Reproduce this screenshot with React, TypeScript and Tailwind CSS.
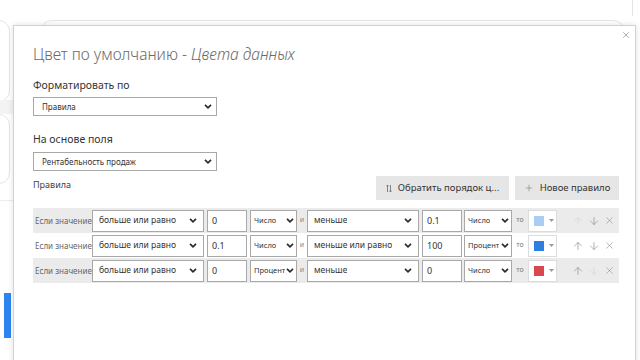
import { ArrowUp, ArrowDown, X, Plus } from 'lucide-react';
import clsx from 'clsx';

type Rule = {
  op1: string;
  v1: string;
  u1: string;
  op2: string;
  v2: string;
  u2: string;
  color: string;
  shaded: boolean;
  upOff?: boolean;
  downOff?: boolean;
};

const rules: Rule[] = [
  { op1: 'больше или равно', v1: '0', u1: 'Число', op2: 'меньше', v2: '0.1', u2: 'Число', color: '#a9cdf4', shaded: true, upOff: true },
  { op1: 'больше или равно', v1: '0.1', u1: 'Число', op2: 'меньше или равно', v2: '100', u2: 'Процент', color: '#2f7fe2', shaded: false },
  { op1: 'больше или равно', v1: '0', u1: 'Процент', op2: 'меньше', v2: '0', u2: 'Число', color: '#d9474f', shaded: true, downOff: true },
];

// small bold chevron used by every dropdown
function Chevron() {
  return (
    <svg width="8" height="5" viewBox="0 0 8 5" className="shrink-0">
      <path d="M1 0.8l3 3 3-3" fill="none" stroke="#2b2b2b" strokeWidth="1.7" />
    </svg>
  );
}

function Dropdown({ value, className }: { value: string; className: string }) {
  return (
    <div className={clsx('flex items-center justify-between gap-0.5 overflow-hidden border border-[#a8a8a8] bg-white pl-1.5 pr-1.5 text-[#333]', className)}>
      <span className="overflow-hidden whitespace-nowrap">{value}</span>
      <Chevron />
    </div>
  );
}

function RuleRow({ r }: { r: Rule }) {
  return (
    <div className={clsx('flex h-[25px] items-center text-[8.5px]', r.shaded ? 'bg-[#ebebeb]' : 'bg-white')}>
      <div className="w-[59px] pl-0.5 text-[8px] whitespace-nowrap text-[#666]">Если значение</div>
      <Dropdown value={r.op1} className="h-[22px] w-[112px]" />
      <div className="ml-[3px] flex h-[22px] w-[40px] items-center border border-[#a8a8a8] bg-white pl-1 text-[9px] text-[#333]">{r.v1}</div>
      <Dropdown value={r.u1} className="ml-[3px] h-[22px] w-[47px] !gap-0 !pl-[3px] !pr-[2px] text-[7.5px]" />
      <div className="w-[10px] text-center text-[7px] text-[#888]">и</div>
      <Dropdown value={r.op2} className="h-[22px] w-[112px]" />
      <div className="ml-[3px] flex h-[22px] w-[40px] items-center border border-[#a8a8a8] bg-white pl-1 text-[9px] text-[#333]">{r.v2}</div>
      <Dropdown value={r.u2} className="ml-[2px] h-[22px] w-[48px] !gap-0 !pl-[3px] !pr-[2px] text-[7.5px]" />
      <div className="w-[16px] text-center text-[7px] text-[#777]">то</div>
      <div className="flex h-[22px] w-[29px] items-center gap-[5px] border border-[#dcdcdc] bg-white pl-[5px]">
        <div className="h-[10px] w-[10px]" style={{ backgroundColor: r.color }} />
        <svg width="5" height="3" viewBox="0 0 5 3">
          <path d="M0 0h5L2.5 3z" fill="#999" />
        </svg>
      </div>
      <div className="ml-[15px] flex items-center gap-[4px]">
        <ArrowUp size={12} strokeWidth={1.3} className={r.upOff ? 'text-[#d4d4d4]' : 'text-[#8a8a8a]'} />
        <ArrowDown size={12} strokeWidth={1.3} className={r.downOff ? 'text-[#d4d4d4]' : 'text-[#8a8a8a]'} />
        <X size={11} strokeWidth={1.3} className="text-[#8a8a8a]" />
      </div>
    </div>
  );
}

export default function App() {
  return (
    <div className="relative h-[360px] w-[640px] overflow-hidden bg-white font-['Segoe_UI','Noto_Sans',sans-serif]">
      {/* faint report page behind the dialog */}
      <div className="absolute left-[40px] top-[20px] h-[80px] w-[585px] rounded-xl border border-[#e6e6e6]" />
      <div className="absolute left-[632px] top-0 h-[16px] w-px bg-[#e4e4e4]" />
      <div className="absolute left-[-12px] top-[20px] h-[82px] w-[22px] rounded-xl border border-[#e6e6e6]" />
      <div className="absolute left-0 top-[100px] h-[14px] w-[13px] bg-[#f3f3f3]" />
      <div className="absolute left-[-12px] top-[114px] h-[70px] w-[22px] rounded-xl border border-[#e6e6e6]" />
      <div className="absolute left-0 top-[200px] h-px w-[13px] bg-[#ececec]" />
      <div className="absolute left-[4px] top-[293px] h-[45px] w-[7px] bg-[#2d86f0]" />

      {/* dialog */}
      <div className="absolute left-[13px] top-[25px] h-[340px] w-[623px] border border-[#d2d2d2] bg-white pl-[19px] pr-[16px] pt-[16px] shadow-[0_0_6px_rgba(0,0,0,0.12)]">
        <X size={10} strokeWidth={1.4} className="absolute right-[4px] top-[4px] text-[#777]" />

        <div className="h-6 text-[15.5px] leading-6 whitespace-nowrap text-[#6a6a6a] font-light">
          Цвет по умолчанию - <span className="italic">Цвета данных</span>
        </div>

        <div className="mt-[10px] h-[18px] text-[10.5px] leading-[18px] text-[#333]">Форматировать по</div>
        <Dropdown value="Правила" className="mt-[3px] h-[19px] w-[184px] !pl-2 !pr-1 text-[8px]" />

        <div className="mt-[14px] h-[18px] text-[10.5px] leading-[18px] text-[#333]">На основе поля</div>
        <Dropdown value="Рентабельность продаж" className="mt-[4px] h-[19px] w-[184px] !pl-2 !pr-1 text-[8px]" />

        <div className="mt-[5px] flex items-start justify-between">
          <div className="pt-0.5 text-[9px] text-[#444]">Правила</div>
          <div className="flex gap-[6px]">
            <div className="flex h-[24px] w-[133px] items-center justify-center gap-1.5 bg-[#e6e6e6] text-[9.5px] text-[#333]">
              <svg width="6" height="9" viewBox="0 0 6 9" className="text-[#777]">
                <path d="M1.5 8V1M0.3 2.3L1.5 1l1.2 1.3M4.5 1v7M3.3 6.7L4.5 8l1.2-1.3" fill="none" stroke="currentColor" strokeWidth="0.9" />
              </svg>
              <span className="whitespace-nowrap">Обратить порядок ц...</span>
            </div>
            <div className="flex h-[24px] w-[104px] items-center justify-center gap-1.5 bg-[#e6e6e6] text-[9.5px] text-[#333]">
              <Plus size={10} strokeWidth={1.3} className="text-[#777]" />
              <span className="whitespace-nowrap">Новое правило</span>
            </div>
          </div>
        </div>

        <div className="mt-[8px] flex flex-col">
          {rules.map((r, i) => (
            <RuleRow key={i} r={r} />
          ))}
        </div>
      </div>
    </div>
  );
}
